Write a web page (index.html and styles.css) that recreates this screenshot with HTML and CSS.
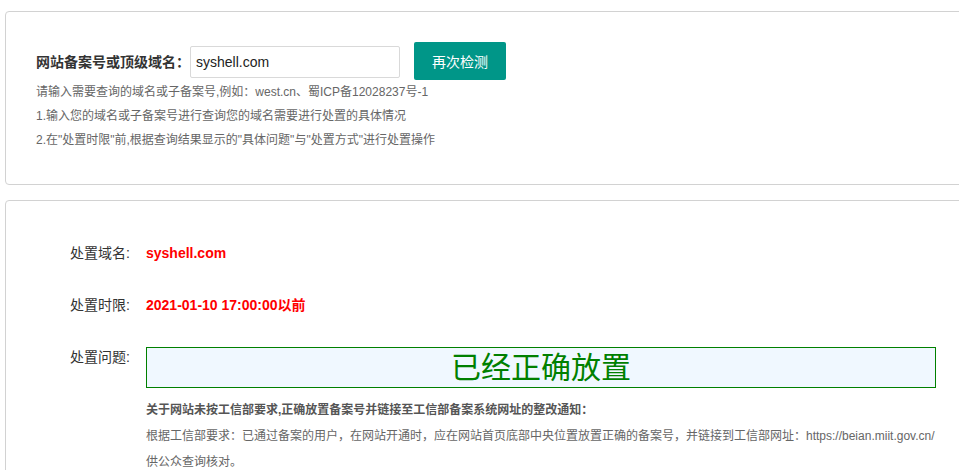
FILE: index.html
```html
<!DOCTYPE html>
<html lang="zh-CN">
<head>
    <meta charset="UTF-8">
    <meta name="viewport" content="width=device-width, initial-scale=1.0">
    <title>备案号检测</title>
    <link rel="stylesheet" href="styles.css">
</head>
<body>
    <div class="page">
        <!-- 查询 -->
        <div class="panel search-panel">
            <div class="search-row">
                <label for="domain" class="search-label">网站备案号或顶级域名：</label>
                <input type="text" id="domain" class="search-input" value="syshell.com">
                <button class="btn">再次检测</button>
            </div>
            <p class="hint">请输入需要查询的域名或子备案号,例如：west.cn、蜀ICP备12028237号-1</p>
            <p class="hint">1.输入您的域名或子备案号进行查询您的域名需要进行处置的具体情况</p>
            <p class="hint">2.在"处置时限"前,根据查询结果显示的"具体问题"与"处置方式"进行处置操作</p>
        </div>

        <!-- 结果 -->
        <div class="panel result-panel">
            <div class="result-row">
                <span class="result-label">处置域名:</span>
                <span class="result-value red">syshell.com</span>
            </div>
            <div class="result-row">
                <span class="result-label">处置时限:</span>
                <span class="result-value red">2021-01-10 17:00:00以前</span>
            </div>
            <div class="result-row">
                <span class="result-label">处置问题:</span>
                <div class="result-value">
                    <div class="status-box">已经正确放置</div>
                    <p class="notice-title">关于网站未按工信部要求,正确放置备案号并链接至工信部备案系统网址的整改通知：</p>
                    <p class="notice-text">根据工信部要求：已通过备案的用户，在网站开通时，应在网站首页底部中央位置放置正确的备案号，并链接到工信部网址：https://beian.miit.gov.cn/<br>供公众查询核对。</p>
                </div>
            </div>
        </div>
    </div>
</body>
</html>
```

FILE: styles.css
```css
html, body {
    margin: 0;
    padding: 0;
    overflow: hidden;
    background-color: #fff;
}

body {
    font-family: "Liberation Sans", Arial, "Noto Sans CJK SC", sans-serif;
    color: #333;
}

.page {
    padding: 11px 0 0 5px;
    width: 1100px;
}

.panel {
    border: 1px solid #d2d2d2;
    border-radius: 4px;
    background-color: #fff;
}

/* Search Panel */
.search-panel {
    padding: 30px 30px 32px;
    margin-bottom: 15px;
}

.search-row {
    display: flex;
    align-items: center;
    height: 38px;
}

.search-label {
    font-size: 14px;
    font-weight: bold;
    color: #333;
}

.search-input {
    width: 210px;
    height: 32px;
    box-sizing: border-box;
    border: 1px solid #d9d9d9;
    border-radius: 2px;
    padding: 0 5px;
    font-family: "Liberation Sans", Arial, sans-serif;
    font-size: 14px;
    color: #222;
    margin-top: 2px;
}

.btn {
    height: 38px;
    padding: 0 18px;
    margin-left: 14px;
    border: none;
    border-radius: 2px;
    background-color: #009688;
    color: #fff;
    font-family: "Liberation Sans", Arial, "Noto Sans CJK SC", sans-serif;
    font-size: 14px;
    cursor: pointer;
}

.hint {
    margin: 0;
    font-size: 12px;
    line-height: 24px;
    color: #666;
}

/* Result Panel */
.result-panel {
    padding-top: 33px;
    height: 400px;
}

.result-row {
    display: flex;
    align-items: flex-start;
    margin-bottom: 14px;
    min-height: 38px;
}

.result-row + .result-row + .result-row {
    margin-top: 2px;
}

.result-label {
    width: 124px;
    padding: 9px 16px 9px 0;
    text-align: right;
    font-size: 14px;
    line-height: 20px;
    color: #333;
}

.result-value {
    padding-top: 9px;
    font-size: 14px;
    line-height: 20px;
}

.red {
    color: #f00;
    font-weight: bold;
}

.status-box {
    width: 788px;
    height: 39px;
    border: 1px solid #008000;
    background-color: #f0f8ff;
    color: #008000;
    font-size: 30px;
    line-height: 39px;
    text-align: center;
}

.notice-title {
    margin: 9px 0 0;
    font-size: 12px;
    line-height: 26px;
    font-weight: bold;
    color: #555;
}

.notice-text {
    margin: 0;
    font-size: 12px;
    line-height: 26px;
    color: #666;
    white-space: nowrap;
}
```
